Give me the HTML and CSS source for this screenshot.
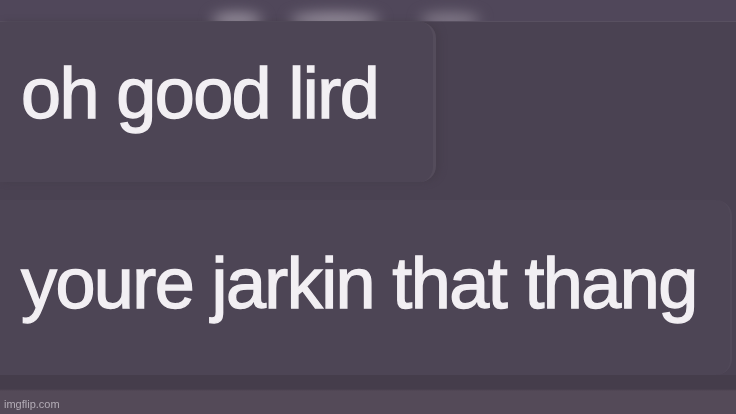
FILE: index.html
```html
<!DOCTYPE html>
<html lang="en">

<head>
    <meta charset="UTF-8">
    <meta name="viewport" content="width=device-width, initial-scale=1.0">
    <title>Chat</title>
    <link rel="stylesheet" href="styles.css">
</head>

<body>
    <main class="chat">
        <div class="chat-top">
            <span class="blob blob-a"></span>
            <span class="blob blob-b"></span>
            <span class="blob blob-c"></span>
        </div>

        <div class="message message-short">
            <p>oh good lird</p>
        </div>

        <div class="message message-long">
            <p>youre jarkin that thang</p>
        </div>

        <footer class="chat-footer">
            <span class="watermark">imgflip.com</span>
        </footer>
    </main>
</body>

</html>
```

FILE: styles.css
```css
*,
::before,
::after {
    margin: 0;
    padding: 0;
    box-sizing: border-box;
}

html,
body {
    width: 736px;
    height: 414px;
    overflow: hidden;
    font-family: 'Liberation Sans', Arial, sans-serif;
    background-color: #4a4252;
}

.chat {
    display: flex;
    flex-direction: column;
    height: 100%;
}

/* the message above, cut off at the top */
.chat-top {
    height: 22px;
    display: flex;
    align-items: flex-end;
    gap: 28px;
    padding-left: 212px;
    background-color: #50475a;
    border-bottom: 1px solid #585060;
    overflow: hidden;
}

.blob {
    width: 50px;
    height: 14px;
    margin-bottom: -6px;
    border-radius: 50%;
    background-color: #9a92a0;
    filter: blur(7px);
}

.blob-b {
    width: 90px;
}

.blob-c {
    width: 60px;
    margin-left: 12px;
    background-color: #857d8c;
}

.message {
    display: flex;
    padding-left: 21px;
    border-radius: 0 16px 16px 0;
    background-color: #4d4555;
}

.message p {
    font-size: 72px;
    line-height: 72px;
    letter-spacing: -1.6px;
    color: #f2eff3;
    white-space: nowrap;
    -webkit-text-stroke: 1.3px #f2eff3;
    filter: blur(0.7px);
}

.message-short {
    width: 436px;
    height: 160px;
    padding-top: 35px;
    border-right: 3px solid #544c5b;
    box-shadow: 4px 0 6px #463e4c;
}

.message-long {
    width: 732px;
    height: 175px;
    margin-top: 18px;
    padding-top: 47px;
    border-right: 2px solid #514959;
}

.chat-footer {
    flex: 1;
    display: flex;
    align-items: flex-end;
    padding: 0 0 4px 4px;
    background: linear-gradient(#453d4b 0, #453d4b 14px, #544a58 16px);
}

.watermark {
    font-family: 'Liberation Sans', Arial, sans-serif;
    font-size: 11px;
    color: #c9c3cc;
    opacity: .8;
}
```
